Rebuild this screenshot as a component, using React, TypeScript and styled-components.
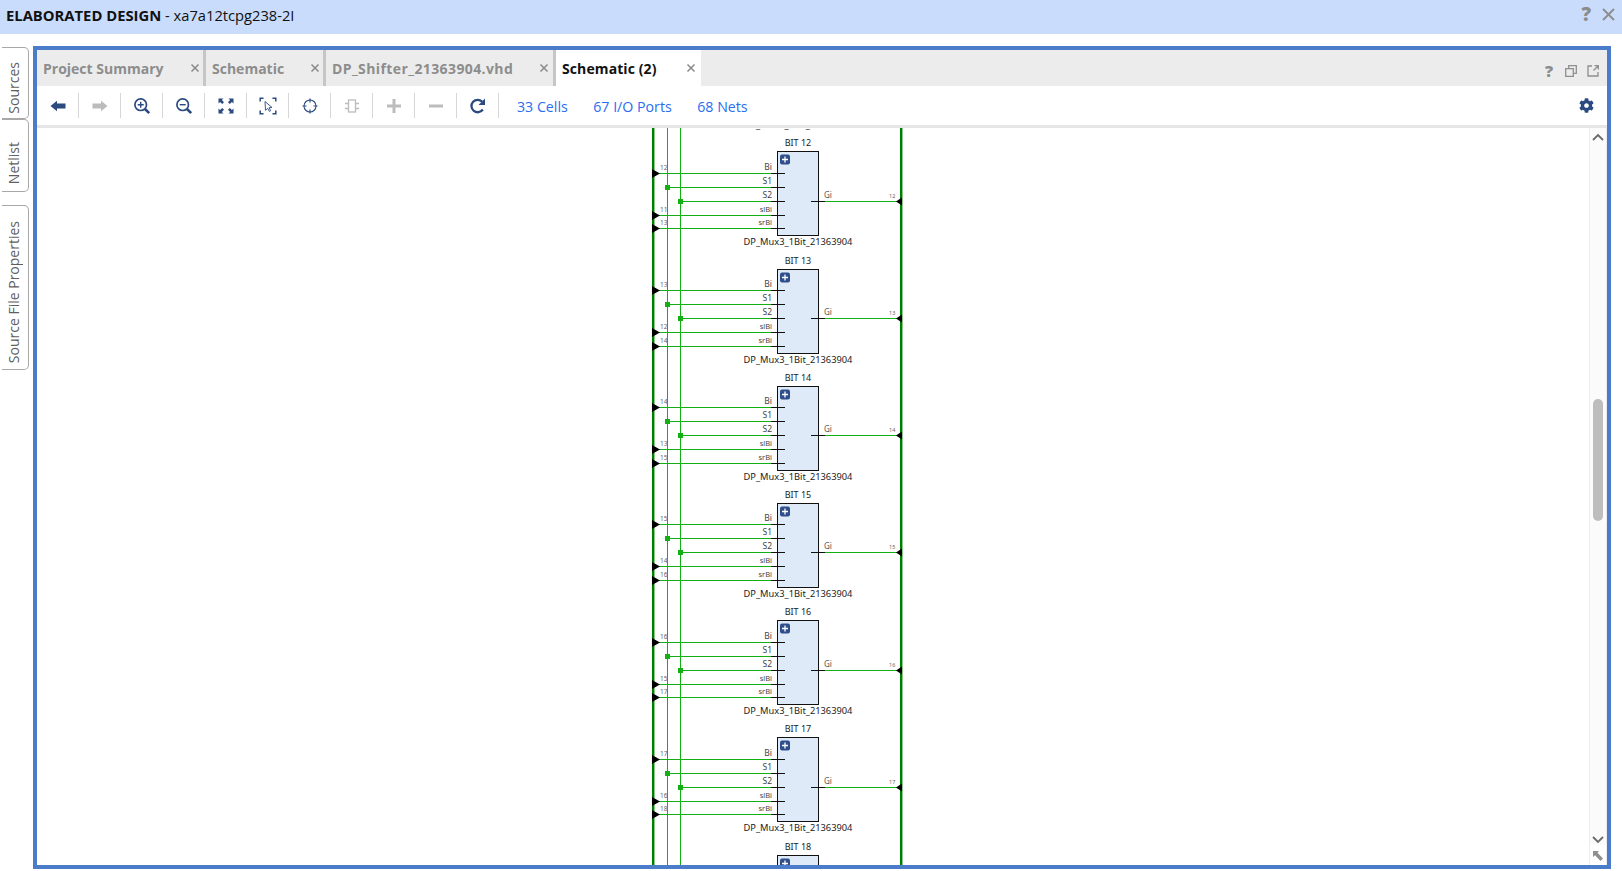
import React from 'react';
import styled, { createGlobalStyle } from 'styled-components';
import { FaCog } from 'react-icons/fa';

const GlobalStyle = createGlobalStyle`
  html, body {
    margin: 0;
    padding: 0;
    height: 100%;
    background: #fff;
    overflow: hidden;
  }
  #root {
    height: 100%;
  }
`;

const FONT = `"Open Sans", "Noto Sans", "Liberation Sans", sans-serif`;
const NAVY = '#2b4a80';
const BUS = '#008000';
const NET = '#12b012';

const Page = styled.div`
  display: flex;
  flex-direction: column;
  width: 1622px;
  height: 871px;
  font-family: ${FONT};
`;

const TitleBar = styled.header`
  display: flex;
  align-items: center;
  height: 34px;
  flex: none;
  padding: 0 7px 5px 6px;
  box-sizing: border-box;
  background: #c9dcfb;
  font-size: 14.700px;
  color: #111;
  white-space: pre;
`;

const TitleStrong = styled.b`
  font-weight: 700;
  font-size: 14.800px;
`;

const TitleActions = styled.div`
  margin-left: auto;
  display: flex;
  align-items: center;
  gap: 11px;
  color: #8c8c8c;
`;

const QuestionMark = styled.span<{ $size: number; $nudge?: number }>`
  font-size: ${(p) => p.$size}px;
  font-weight: 800;
  line-height: 1;
  margin-right: ${(p) => p.$nudge ?? 0}px;
  color: #8c8c8c;
`;

const Body = styled.div`
  display: flex;
  flex: 1;
  min-height: 0;
  padding: 12px 11px 2px 2px;
`;

const SideTabs = styled.nav`
  display: flex;
  flex-direction: column;
  width: 31px;
  flex: none;
  padding-top: 1px;
`;

const SideTab = styled.div<{ $height: number; $gap?: number; $shift?: number }>`
  height: ${(p) => p.$height}px;
  width: 27px;
  margin-top: ${(p) => p.$gap ?? 0}px;
  box-sizing: border-box;
  border: 1px solid #a8a8a8;
  border-left: none;
  border-radius: 0 5px 5px 0;
  padding: ${(p) => p.$shift ?? 10}px 3px 0 0;
  display: flex;
  align-items: center;
  justify-content: center;
`;

const SideTabLabel = styled.span`
  writing-mode: vertical-rl;
  transform: rotate(180deg);
  font-size: 14px;
  color: #5f5f5f;
  white-space: nowrap;
`;

const Panel = styled.main`
  flex: 1;
  min-width: 0;
  display: flex;
  flex-direction: column;
  border: 4px solid #4a7cc9;
  background: #fff;
`;

const TabStrip = styled.div`
  display: flex;
  height: 36px;
  flex: none;
  background: #ececec;
`;

const Tab = styled.div<{ $width: number; $active?: boolean; $tracking?: number }>`
  position: relative;
  display: flex;
  align-items: center;
  box-sizing: border-box;
  width: ${(p) => p.$width}px;
  padding-left: 6px;
  background: ${(p) => (p.$active ? '#fff' : 'transparent')};
  border-right: 3px solid ${(p) => (p.$active ? 'transparent' : '#c6c6c6')};
  font-size: 14px;
  font-weight: 700;
  letter-spacing: ${(p) => p.$tracking ?? 0}px;
  color: ${(p) => (p.$active ? '#111' : '#8d8d8d')};
  white-space: nowrap;
`;

const TabClose = styled.svg<{ $right: number }>`
  position: absolute;
  right: ${(p) => p.$right}px;
  top: 13px;
  width: 10px;
  height: 10px;
  stroke: #8a8a8a;
  stroke-width: 1.5;
  fill: none;
`;

const StripActions = styled.div`
  margin-left: auto;
  display: flex;
  align-items: center;
  gap: 10px;
  padding: 5px 8px 0 0;
  color: #8f8f8f;
`;

const Toolbar = styled.div`
  display: flex;
  align-items: center;
  height: 39px;
  flex: none;
  border-bottom: 3px solid #e6e6e6;
`;

const ToolButton = styled.button<{ $disabled?: boolean }>`
  width: 42px;
  height: 25px;
  flex: none;
  padding: 0;
  background: none;
  border: none;
  border-right: 1px solid #d6d6d6;
  display: flex;
  align-items: center;
  justify-content: center;
  color: ${(p) => (p.$disabled ? '#bcbcbc' : NAVY)};
`;

const ToolLinks = styled.div`
  display: flex;
  gap: 25.500px;
  padding: 1px 0 0 18px;
`;

const ToolLink = styled.a`
  font-size: 14.200px;
  color: #2a6df0;
  white-space: nowrap;
`;

const GearSlot = styled.div`
  margin-left: auto;
  padding-right: 13px;
  display: flex;
  color: ${NAVY};
`;

const Workspace = styled.div`
  flex: 1;
  min-height: 0;
  display: flex;
`;

const Canvas = styled.div`
  flex: 1;
  min-width: 0;
  overflow: hidden;
  background: #fff;
`;

const Scrollbar = styled.div`
  position: relative;
  width: 18px;
  flex: none;
  box-sizing: border-box;
  background: #fbfbfb;
  border-left: 1px solid #ececec;
  border-right: 1px solid #ececec;
  display: flex;
  flex-direction: column;
  align-items: center;
  padding-top: 5px;
  color: #6a6a6a;
`;

const ScrollThumb = styled.div`
  width: 10px;
  height: 122px;
  margin-top: 258px;
  border-radius: 5px;
  background: #bdbdbd;
`;

const ScrollDown = styled.div`
  margin-top: 315px;
  display: flex;
`;

const ResizeCorner = styled.div`
  position: absolute;
  left: 0;
  right: 0;
  bottom: 0;
  height: 20px;
  box-sizing: border-box;
  background: #fff;
  display: flex;
  justify-content: center;
  padding-top: 6px;
  color: #909090;
`;

const SchematicSvg = styled.svg`
  display: block;
  font-family: "Noto Sans", "Open Sans", sans-serif;
`;

const Ico: React.FC<{ children: React.ReactNode }> = ({ children }) => (
  <svg width="18" height="18" viewBox="0 0 18 18" fill="none" stroke="currentColor" strokeWidth="2">
    {children}
  </svg>
);

const Filled = (d: string) => <path d={d} fill="currentColor" stroke="none" />;

const toolIcons: { key: string; disabled?: boolean; icon: React.ReactNode }[] = [
  { key: 'back', icon: <Ico>{Filled('M1.500 9 8 3.800V6.600h8.500v4.800H8v2.800Z')}</Ico> },
  { key: 'forward', disabled: true, icon: <Ico>{Filled('M16.500 9 10 3.800V6.600H1.500v4.800H10v2.800Z')}</Ico> },
  {
    key: 'zoomin',
    icon: (
      <Ico>
        <circle cx="7.700" cy="7.700" r="5.800" strokeWidth="1.700" />
        <path d="M7.700 4.700v6M4.700 7.700h6" strokeWidth="1.400" />
        <path d="m12 12 4.200 4.200" strokeWidth="2.600" />
      </Ico>
    ),
  },
  {
    key: 'zoomout',
    icon: (
      <Ico>
        <circle cx="7.700" cy="7.700" r="5.800" strokeWidth="1.700" />
        <path d="M4.700 7.700h6" strokeWidth="1.400" />
        <path d="m12 12 4.200 4.200" strokeWidth="2.600" />
      </Ico>
    ),
  },
  {
    key: 'fit',
    icon: (
      <Ico>
        {Filled('M1.500 1.500h5L4.900 3.100 7 5.200 5.200 7 3.100 4.900 1.500 6.500Z')}
        {Filled('M16.500 1.500h-5l1.600 1.600L11 5.200 12.800 7l2.100-2.100 1.600 1.600Z')}
        {Filled('M1.500 16.500h5l-1.600-1.600L7 12.800 5.200 11l-2.100 2.100-1.600-1.600Z')}
        {Filled('M16.500 16.500h-5l1.600-1.600L11 12.800 12.800 11l2.100 2.100 1.600-1.600Z')}
      </Ico>
    ),
  },
  {
    key: 'fitselection',
    icon: (
      <Ico>
        <path d="M1.200 4.500V1.200H4.500M13.500 1.200h3.300V4.500M1.200 13.500v3.300H4.500M13.500 16.800h3.300V13.500" strokeWidth="1.500" />
        <path d="m6 4.500 7 6-3 .2 1.700 3-1.300.7-1.700-3-2.200 1.800Z" strokeWidth=".9" />
      </Ico>
    ),
  },
  {
    key: 'crosshair',
    icon: (
      <Ico>
        <circle cx="9" cy="9" r="6" strokeWidth="1.100" />
        <path d="M9 1.500v4M9 12.500v4M1.500 9h4M12.500 9h4" strokeWidth="1.200" />
      </Ico>
    ),
  },
  {
    key: 'cell',
    disabled: true,
    icon: (
      <Ico>
        <rect x="5.500" y="3" width="7" height="12" strokeWidth="1.300" />
        <path d="M2 6.500h3.500M2 11.500h3.500M12.500 6.500H16M12.500 11.500H16" strokeWidth="1.500" />
      </Ico>
    ),
  },
  { key: 'plus', disabled: true, icon: <Ico><path d="M9 2v14M2 9h14" strokeWidth="3" /></Ico> },
  { key: 'minus', disabled: true, icon: <Ico><path d="M2 9h14" strokeWidth="3" /></Ico> },
  {
    key: 'reload',
    icon: (
      <Ico>
        <path d="M13.800 12.500A6.200 6.200 0 1 1 13.200 4.800" strokeWidth="2.300" />
        {Filled('M16 1.500v6.500h-6.500Z')}
      </Ico>
    ),
  },
];

const tabs = [
  { label: 'Project Summary', width: 169, closeRight: 3 },
  { label: 'Schematic', width: 120, closeRight: 3 },
  { label: 'DP_Shifter_21363904.vhd', width: 230, closeRight: 4, tracking: 0.4 },
  { label: 'Schematic (2)', width: 145, closeRight: 2, active: true, tracking: 0.1 },
];

const PIN_LABELS = ['Bi', 'S1', 'S2', 'slBi', 'srBi'];
const PIN_OFFSETS = [21.5, 35.5, 49.5, 63.5, 77];
const FIRST_TOP = 151.3;
const PITCH = 117.2;
const BUSES = { left: 653.2, s1: 667.5, s2: 680.5, right: 901.2 };

const Mux: React.FC<{ bit: number; top: number }> = ({ bit, top }) => {
  const boxTop = Math.round(top) + 0.5;
  const pins = PIN_OFFSETS.map((o) => Math.round(top + o) + 0.5);
  const out = pins[2];
  const indexes: Record<number, number> = { 0: bit, 3: bit - 1, 4: bit + 1 };
  return (
    <g>
      <text x="798" y={boxTop - 6} fontSize="9" fill="#222" textAnchor="middle">
        BIT {bit}
      </text>
      <rect x="777.500" y={boxTop} width="41" height="84" fill="#deeaf8" stroke="#111" strokeWidth="1" />
      <rect x="780" y={boxTop + 3} width="10" height="10" rx="2" fill="#2f4f8c" />
      <path d={`M782 ${boxTop + 8}h6M785 ${boxTop + 5}v6`} stroke="#fff" strokeWidth="1.300" />
      {pins.map((y, i) => (
        <g key={PIN_LABELS[i]}>
          <line x1={i === 1 ? BUSES.s1 : i === 2 ? BUSES.s2 : BUSES.left} x2="771" y1={y} y2={y} stroke={NET} strokeWidth="1" />
          <line x1="771" x2="785" y1={y} y2={y} stroke="#111" strokeWidth="1" />
          <text x="772" y={y - 4} fontSize={i > 2 ? 7.500 : 8.500} fill="#444" textAnchor="end">
            {PIN_LABELS[i]}
          </text>
          {i in indexes ? (
            <>
              <path d={`M652 ${y - 4.500}l8 4.500l-8 4.500Z`} fill="#000" />
              <text x="660" y={y - 3.500} fontSize="6.500" fill="#666">
                {indexes[i]}
              </text>
            </>
          ) : (
            <rect x={(i === 1 ? BUSES.s1 : BUSES.s2) - 2.500} y={y - 2.500} width="5" height="5" fill={NET} />
          )}
        </g>
      ))}
      <line x1="811" x2="825" y1={out} y2={out} stroke="#111" strokeWidth="1" />
      <line x1="825" x2={BUSES.right} y1={out} y2={out} stroke={NET} strokeWidth="1" />
      <path d={`M902 ${out - 4}l-6 4l6 4Z`} fill="#000" />
      <text x="824" y={out - 4} fontSize="8" fill="#555">
        Gi
      </text>
      <text x="889" y={out - 3.500} fontSize="5.500" fill="#666">
        {bit}
      </text>
      <text x="798" y={boxTop + 93} fontSize="9.300" fill="#222" textAnchor="middle">
        DP_Mux3_1Bit_21363904
      </text>
    </g>
  );
};

const Schematic: React.FC = () => {
  const bits = [11, 12, 13, 14, 15, 16, 17, 18];
  return (
    <SchematicSvg width="1552" height="737" viewBox="37 128 1552 737">
      <line x1={BUSES.left} x2={BUSES.left} y1="128" y2="865" stroke={BUS} strokeWidth="2.500" />
      <line x1={BUSES.s1} x2={BUSES.s1} y1="128" y2="865" stroke={NET} strokeWidth="1" />
      <line x1={BUSES.s2} x2={BUSES.s2} y1="128" y2="865" stroke={NET} strokeWidth="1" />
      <line x1={BUSES.right} x2={BUSES.right} y1="128" y2="865" stroke={BUS} strokeWidth="2.500" />
      {bits.map((bit) => (
        <Mux key={bit} bit={bit} top={FIRST_TOP + (bit - 12) * PITCH} />
      ))}
    </SchematicSvg>
  );
};

const App: React.FC = () => (
  <Page>
    <GlobalStyle />
    <TitleBar>
      <TitleStrong>ELABORATED DESIGN</TitleStrong>
      {' - xa7a12tcpg238-2I'}
      <TitleActions>
        <QuestionMark $size={19}>?</QuestionMark>
        <svg width="13" height="13" viewBox="0 0 13 13" stroke="currentColor" strokeWidth="1.800" fill="none">
          <path d="M1 1l11 11M12 1 1 12" />
        </svg>
      </TitleActions>
    </TitleBar>
    <Body>
      <SideTabs>
        <SideTab $height={72}>
          <SideTabLabel>Sources</SideTabLabel>
        </SideTab>
        <SideTab $height={73} $shift={16}>
          <SideTabLabel>Netlist</SideTabLabel>
        </SideTab>
        <SideTab $height={165} $gap={13}>
          <SideTabLabel>Source File Properties</SideTabLabel>
        </SideTab>
      </SideTabs>
      <Panel>
        <TabStrip>
          {tabs.map((t) => (
            <Tab key={t.label} $width={t.width} $active={t.active} $tracking={t.tracking}>
              {t.label}
              <TabClose $right={t.closeRight} viewBox="0 0 10 10">
                <path d="M1.500 1.500l7 7M8.500 1.500l-7 7" />
              </TabClose>
            </Tab>
          ))}
          <StripActions>
            <QuestionMark $size={16} $nudge={2}>?</QuestionMark>
            <svg width="12" height="12" viewBox="0 0 12 12" fill="none" stroke="currentColor" strokeWidth="1.300">
              <path d="M.700 3.700h7.600v7.600H.700ZM3.700 3.700V.700h7.600v7.600H8.300" />
            </svg>
            <svg width="12" height="12" viewBox="0 0 12 12" fill="none" stroke="currentColor" strokeWidth="1.300">
              <path d="M5 1H1v10h10V7" />
              <path d="M6.500 5.500 11 1M7.500 .700h3.800v3.800" />
            </svg>
          </StripActions>
        </TabStrip>
        <Toolbar>
          {toolIcons.map((t) => (
            <ToolButton key={t.key} $disabled={t.disabled}>
              {t.icon}
            </ToolButton>
          ))}
          <ToolLinks>
            <ToolLink>33 Cells</ToolLink>
            <ToolLink>67 I/O Ports</ToolLink>
            <ToolLink>68 Nets</ToolLink>
          </ToolLinks>
          <GearSlot>
            <FaCog size={15} />
          </GearSlot>
        </Toolbar>
        <Workspace>
          <Canvas>
            <Schematic />
          </Canvas>
          <Scrollbar>
            <svg width="12" height="8" viewBox="0 0 12 8" fill="none" stroke="currentColor" strokeWidth="1.800">
              <path d="M1 7l5-5 5 5" />
            </svg>
            <ScrollThumb />
            <ScrollDown>
              <svg width="12" height="8" viewBox="0 0 12 8" fill="none" stroke="currentColor" strokeWidth="1.800">
                <path d="M1 1l5 5 5-5" />
              </svg>
            </ScrollDown>
            <ResizeCorner>
              <svg width="10" height="10" viewBox="0 0 10 10" fill="currentColor">
                <path d="M0 0h6L4.500 1.800 10 7.500 7.500 10 2 4.300 0 6Z" />
              </svg>
            </ResizeCorner>
          </Scrollbar>
        </Workspace>
      </Panel>
    </Body>
  </Page>
);

export default App;
